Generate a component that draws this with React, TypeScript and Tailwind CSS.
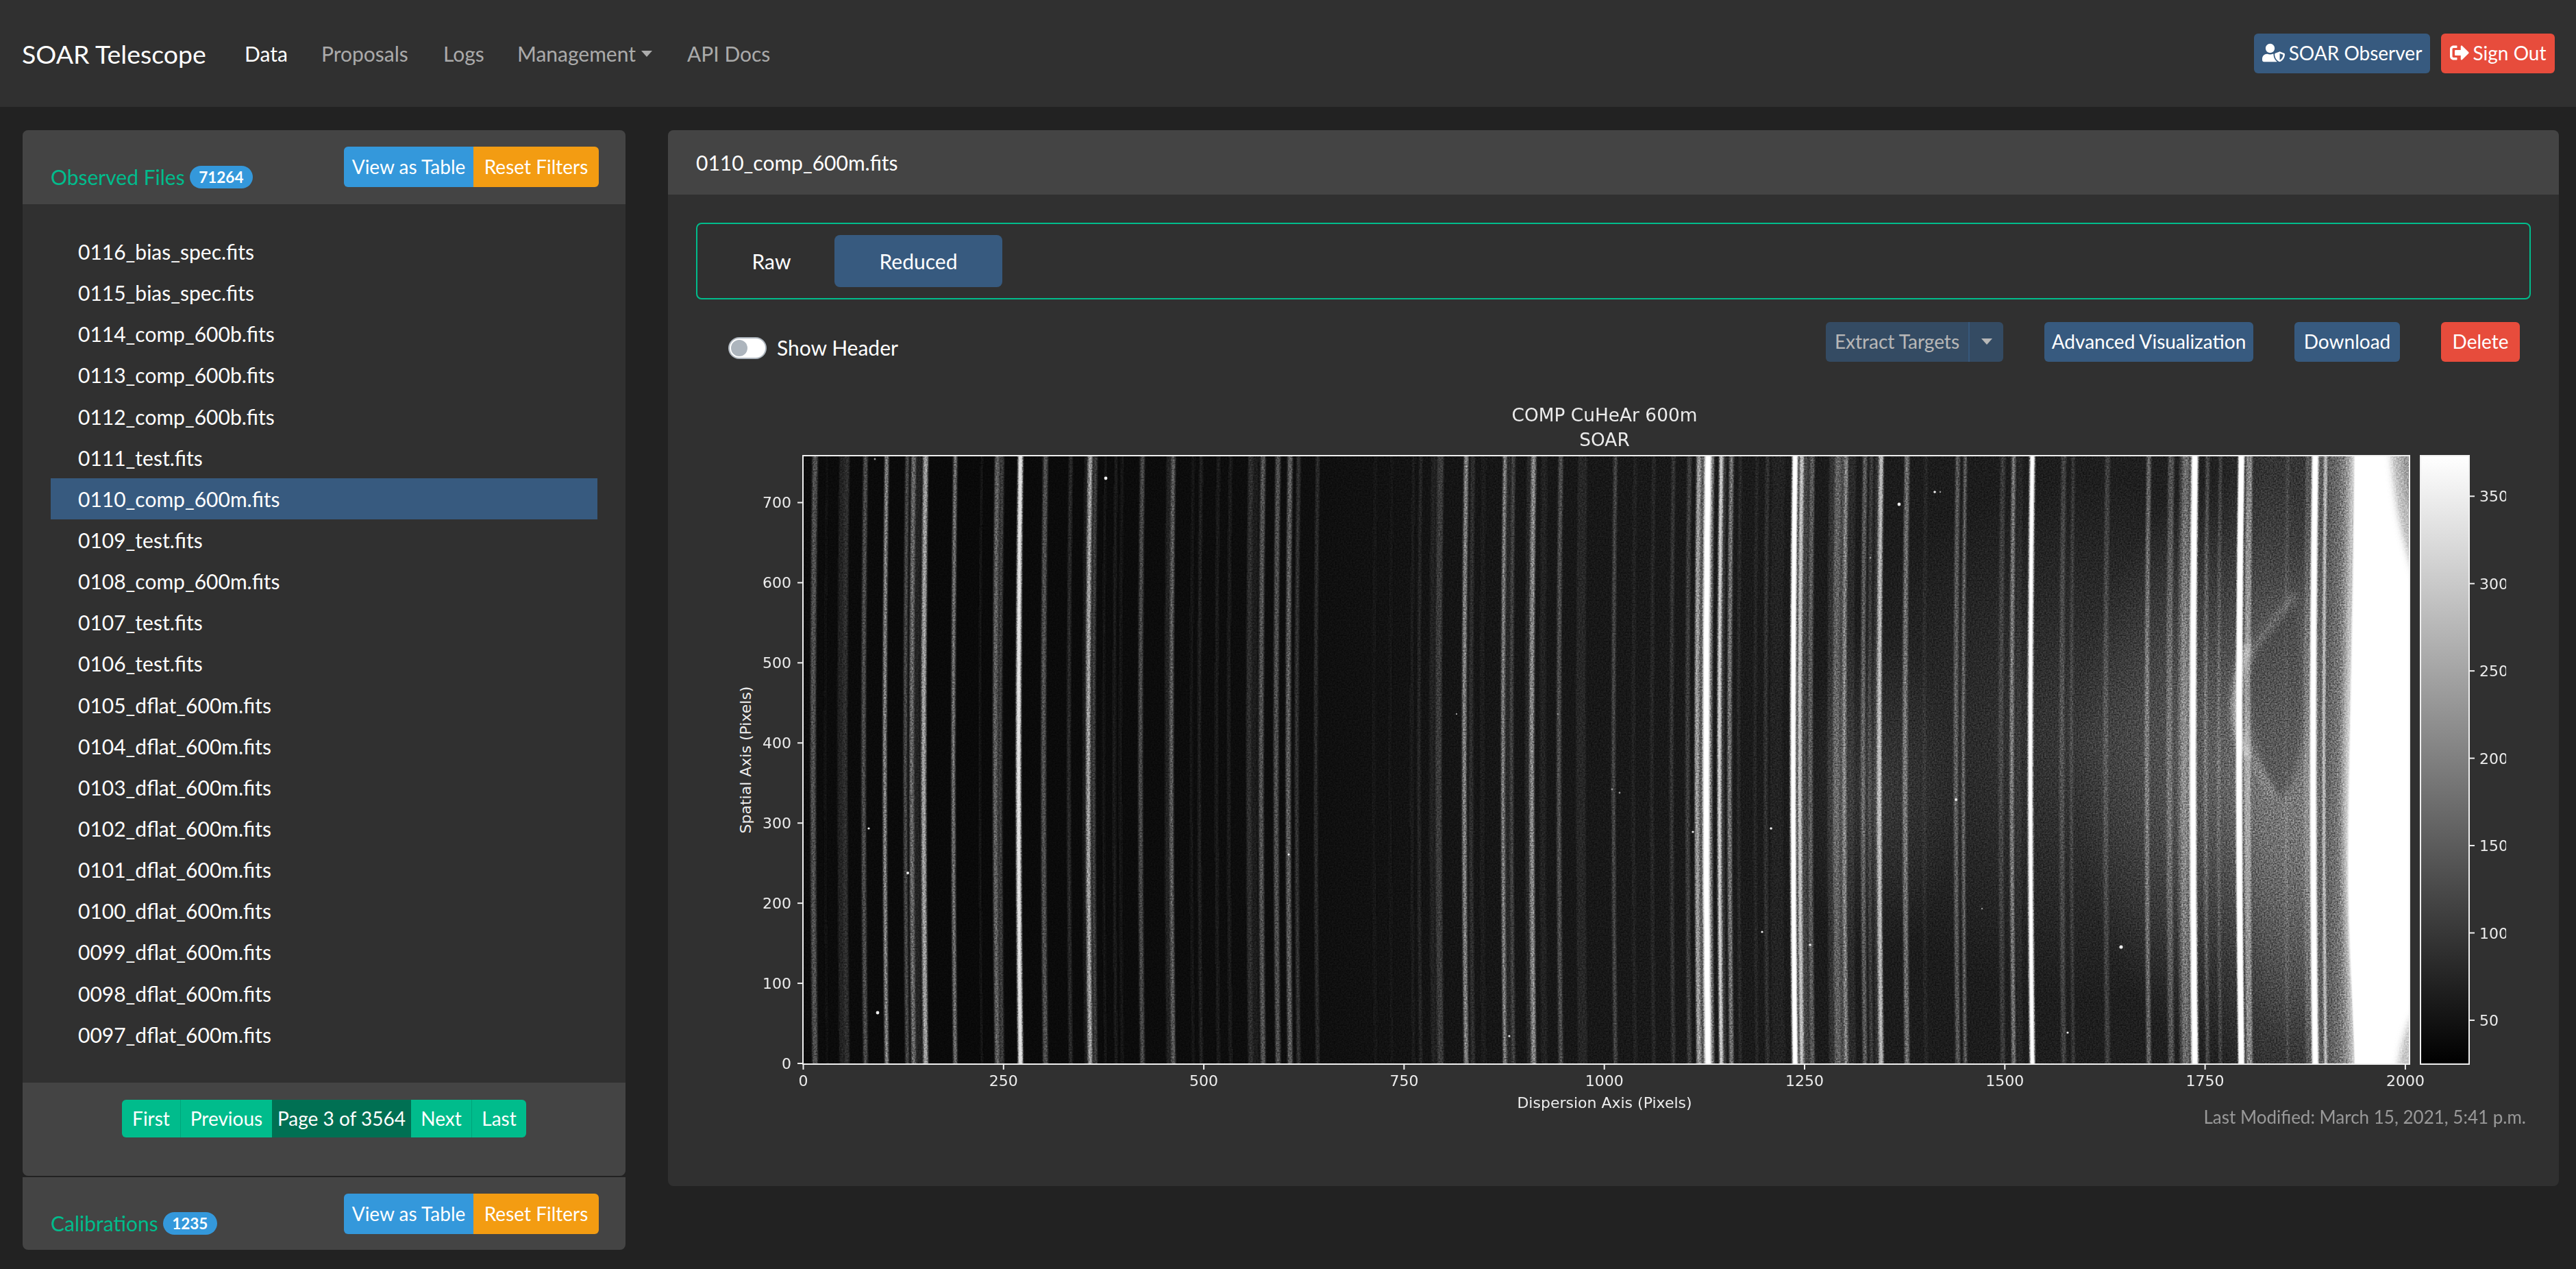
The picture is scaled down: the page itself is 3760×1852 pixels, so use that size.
import React from "react";
import { FaSignOutAlt, FaUserShield } from "react-icons/fa";

const files = [
  "0116_bias_spec.fits",
  "0115_bias_spec.fits",
  "0114_comp_600b.fits",
  "0113_comp_600b.fits",
  "0112_comp_600b.fits",
  "0111_test.fits",
  "0110_comp_600m.fits",
  "0109_test.fits",
  "0108_comp_600m.fits",
  "0107_test.fits",
  "0106_test.fits",
  "0105_dflat_600m.fits",
  "0104_dflat_600m.fits",
  "0103_dflat_600m.fits",
  "0102_dflat_600m.fits",
  "0101_dflat_600m.fits",
  "0100_dflat_600m.fits",
  "0099_dflat_600m.fits",
  "0098_dflat_600m.fits",
  "0097_dflat_600m.fits",
];

// Emission lines per detector segment: [centre, width, grey level].
type Line = [number, number, number];
const UNIT = 2.6576;
const segments: { origin: number; lines: Line[] }[] = [
  {
    origin: 1170,
    lines: [
      [58, 20, 80], [105, 8, 20], [165, 24, 36], [182, 18, 45], [254, 16, 75], [336, 14, 130],
      [416, 14, 70], [460, 24, 35], [440, 16, 105], [487, 18, 158], [602, 14, 110], [705, 10, 20],
      [765, 18, 95], [784, 14, 62], [855, 18, 225], [952, 18, 80], [1050, 14, 42], [1110, 14, 30],
      [1146, 14, 60], [1126, 15, 165], [1185, 10, 22], [1226, 12, 28], [1250, 12, 24], [1328, 16, 74],
      [1430, 16, 32], [1448, 15, 92], [1525, 12, 24], [1556, 12, 36],
    ],
  },
  {
    origin: 1760,
    lines: [
      [55, 14, 26], [102, 14, 26], [200, 24, 28], [180, 18, 45], [228, 18, 82], [286, 18, 80],
      [333, 18, 92], [366, 14, 50], [440, 14, 44], [665, 14, 24], [728, 12, 24], [812, 12, 28],
      [840, 12, 38], [890, 18, 36], [916, 24, 58], [1042, 16, 46], [1016, 16, 128], [1085, 20, 26],
      [1182, 14, 40], [1166, 13, 128], [1199, 14, 66], [1260, 16, 40], [1278, 17, 136], [1320, 24, 32],
      [1383, 16, 78], [1468, 36, 38],
    ],
  },
  {
    origin: 2350,
    lines: [
      [27, 14, 68], [104, 14, 36], [176, 14, 38], [252, 14, 54], [314, 16, 60], [364, 18, 85],
      [350, 15, 160], [404, 12, 115], [386, 25, 255], [450, 14, 55], [437, 13, 210], [477, 16, 115],
      [512, 12, 44], [576, 12, 40], [617, 14, 50], [660, 50, 34], [765, 24, 66], [724, 22, 255],
      [749, 15, 195], [790, 18, 92], [868, 22, 50], [892, 26, 98], [908, 14, 70], [922, 13, 135],
      [945, 30, 44], [995, 16, 92], [1020, 14, 60], [1042, 14, 50], [1058, 16, 185], [1158, 18, 108],
      [1232, 14, 40], [1355, 16, 88], [1384, 12, 94], [1530, 18, 58], [1572, 15, 115],
    ],
  },
  {
    origin: 2940,
    lines: [
      [30, 20, 38], [76, 19, 255], [198, 18, 66], [235, 12, 58], [368, 18, 64], [528, 16, 102],
      [615, 22, 82], [655, 14, 66], [672, 24, 108], [690, 14, 80], [756, 14, 76], [806, 12, 68],
      [707, 25, 255], [918, 24, 135], [887, 20, 255], [1067, 12, 72], [1150, 26, 88], [1196, 36, 112],
      [1174, 23, 255], [1214, 12, 170],
    ],
  },
];

const cosmicRays: [number, number, number][] = [
  [1279, 670, 1.4], [1616, 698, 2.4], [1270, 1209, 1.6], [1327, 1274, 2], [1283, 1478, 2.4], [1883, 1247, 1.6],
  [2128, 1042, 1.2], [2205, 1512, 1.6], [2276, 1042, 1.2], [2355, 1152, 1.4], [2366, 1157, 1.4], [2473, 1214, 1.6],
  [2587, 1209, 1.8], [2574, 1360, 1.6], [2644, 1379, 1.8], [2732, 814, 1.4], [2774, 736, 2.4], [2826, 718, 1.8],
  [2834, 718, 1.2], [2857, 1167, 2], [2895, 1326, 1.2], [3098, 1382, 2.6], [3020, 1507, 1.6],
];

const xTicks = [0, 250, 500, 750, 1000, 1250, 1500, 1750, 2000];
const yTicks = [0, 100, 200, 300, 400, 500, 600, 700];
const barTicks = [50, 100, 150, 200, 250, 300, 350];
const grey = (v: number) => `rgb(${v},${v},${v})`;

function SpectrumPlot() {
  const left = 1174, right = 3519, top = 665, bottom = 1553;
  return (
    <svg viewBox="1060 580 2600 1056" className="block h-[1056px] w-[2600px] shrink-0" fontFamily='"DejaVu Sans", sans-serif' fontSize="22" fill="#ececec">
      <defs>
        <clipPath id="frame"><rect x={left} y={top} width={right - left} height={bottom - top} /></clipPath>
        <linearGradient id="sky" gradientUnits="userSpaceOnUse" x1={left} x2={right} y1="0" y2="0">
          <stop offset="0" stopColor="#0b0b0b" />
          <stop offset="0.1" stopColor="#090909" />
          <stop offset="0.3" stopColor="#0d0d0d" />
          <stop offset="0.42" stopColor="#151515" />
          <stop offset="0.6" stopColor="#1a1a1a" />
          <stop offset="0.75" stopColor="#1c1c1c" />
          <stop offset="0.88" stopColor="#202020" />
          <stop offset="0.91" stopColor="#343434" />
          <stop offset="1" stopColor="#3a3a3a" />
        </linearGradient>
        <linearGradient id="ramp" gradientUnits="userSpaceOnUse" x1="3370" x2="3440" y1="0" y2="0">
          <stop offset="0" stopColor="#484848" stopOpacity="0" />
          <stop offset="0.3" stopColor="#505050" />
          <stop offset="0.65" stopColor="#7a7a7a" />
          <stop offset="1" stopColor="#d0d0d0" />
        </linearGradient>
        <linearGradient id="edge" x1="0" x2="1" y1="0" y2="0">
          <stop offset="0" stopColor="#303030" stopOpacity="0" />
          <stop offset="1" stopColor="#303030" stopOpacity="0.3" />
        </linearGradient>
        <radialGradient id="haze">
          <stop offset="0" stopColor="#fff" stopOpacity="0.27" />
          <stop offset="0.5" stopColor="#fff" stopOpacity="0.13" />
          <stop offset="1" stopColor="#fff" stopOpacity="0" />
        </radialGradient>
        <linearGradient id="bar" x1="0" x2="0" y1="0" y2="1">
          <stop offset="0" stopColor="#fff" />
          <stop offset="1" stopColor="#000" />
        </linearGradient>
        <filter id="soft" filterUnits="userSpaceOnUse" x="1100" y="600" width="2500" height="1000"><feGaussianBlur stdDeviation="1.3 0.5" /></filter>
        <filter id="glow" filterUnits="userSpaceOnUse" x="3100" y="600" width="500" height="1000"><feGaussianBlur stdDeviation="5" /></filter>
        <filter id="grain" filterUnits="userSpaceOnUse" x={left} y={top} width={right - left} height={bottom - top} colorInterpolationFilters="sRGB">
          <feTurbulence type="fractalNoise" baseFrequency="0.45" numOctaves="2" seed="4" />
          <feColorMatrix values="1.1 0 0 0 -0.05  1.1 0 0 0 -0.05  1.1 0 0 0 -0.05  0 0 0 0 1" />
        </filter>
      </defs>

      <g clipPath="url(#frame)" className="isolate">
        <rect x={left} y={top} width={right - left} height={bottom - top} fill="url(#sky)" />
        <g filter="url(#soft)" fill="none">
          {segments.map((s) =>
            s.lines.map(([c, w, v]) => {
              const x = s.origin + c / UNIT;
              return <path key={`${s.origin}-${c}`} d={`M${x} 655Q${x - 6} 1109 ${x} 1563`} stroke={grey(v)} strokeWidth={w / UNIT} />;
            })
          )}
        </g>
        <ellipse cx="3270" cy="1120" rx="240" ry="430" fill="url(#haze)" />
        <ellipse cx="3400" cy="1180" rx="150" ry="400" fill="url(#haze)" />
        <ellipse cx="3050" cy="1080" rx="400" ry="380" fill="url(#haze)" opacity="0.45" />
        <ellipse cx="2740" cy="1160" rx="120" ry="240" fill="url(#haze)" opacity="0.4" />
        <g filter="url(#glow)" fill="none" strokeLinecap="round">
          <path d="M3290 945C3315 905 3345 885 3347 870C3372 980 3372 1130 3330 1165C3300 1130 3275 1040 3290 945Z" fill="#3c3c3c" opacity="0.5" />
          <path d="M3350 870L3292 945Q3240 1050 3290 1110L3320 1160" stroke="#b8b8b8" strokeWidth="8" opacity="0.35" />
          <path d="M3280 945Q3250 1040 3280 1100" stroke="#fff" strokeWidth="10" opacity="0.5" />
        </g>
        <path d="M3367 655H3438Q3422 1250 3438 1563H3367Q3362 1109 3367 655Z" fill="url(#ramp)" opacity="0.8" />
        <g filter="url(#soft)" fill="none">
          <path d="M3273.8 655Q3266 1109 3273.8 1563" stroke="#fff" strokeWidth="8" />
          <path d="M3381.8 655Q3375 1109 3381.8 1563" stroke="#fff" strokeWidth="8.6" />
          <path d="M3396.8 655Q3391 1109 3396.8 1563" stroke="#c4c4c4" strokeWidth="4" />
        </g>
        <g filter="url(#glow)">
          <path d="M3434 640C3432 900 3422 1100 3424 1250C3426 1400 3436 1480 3436 1600H3600V640Z" fill="#d8d8d8" />
        </g>
        <g filter="url(#soft)">
          <path d="M3438 640C3437 900 3430 1080 3429 1250C3429 1400 3438 1480 3439 1600H3600V640Z" fill="#fff" />
        </g>
        <g filter="url(#glow)">
          <path d="M3491 640Q3496 760 3530 850V640Z" fill="#bbb" />
          <path d="M3505 640Q3508 720 3530 770V640Z" fill="#888" opacity="0.7" />
          <path d="M3500 1580Q3504 1510 3530 1470V1580Z" fill="#c4c4c4" />
        </g>
        <rect x={left} y={top} width={right - left} height={bottom - top} filter="url(#grain)" className="mix-blend-overlay" opacity="0.7" />
        {cosmicRays.map(([x, y, r]) => <circle key={`${x}-${y}`} cx={x} cy={y} r={r} fill={r > 1.5 ? "#eee" : "#999"} />)}
      </g>

      <rect x={left} y={top} width={right - left} height={bottom - top} fill="none" stroke="#efefef" strokeWidth="2" />
      {xTicks.map((t) => {
        const x = 1174.5 + t * 1.1692;
        return (
          <g key={t}>
            <path d={`M${x} 1553v8`} stroke="#efefef" strokeWidth="2" />
            <text x={x} y="1585" textAnchor="middle">{t}</text>
          </g>
        );
      })}
      {yTicks.map((t) => {
        const y = 1552 - t * 1.1693;
        return (
          <g key={t}>
            <path d={`M1166 ${y}h8`} stroke="#efefef" strokeWidth="2" />
            <text x="1157" y={y + 8} textAnchor="end">{t}</text>
          </g>
        );
      })}
      <text x="2344" y="1617" textAnchor="middle">Dispersion Axis (Pixels)</text>
      <text transform="translate(1098 1109) rotate(-90)" textAnchor="middle">Spatial Axis (Pixels)</text>
      <text x="2344" y="615" textAnchor="middle" fontSize="26.4">COMP CuHeAr 600m</text>
      <text x="2344" y="651" textAnchor="middle" fontSize="26.4">SOAR</text>

      <rect x="3535" y={top} width="71" height={bottom - top} fill="url(#bar)" stroke="#efefef" strokeWidth="2" />
      {barTicks.map((t) => {
        const y = 1616.4 - t * 2.549;
        return (
          <g key={t}>
            <path d={`M3606 ${y}h8`} stroke="#efefef" strokeWidth="2" />
            <text x="3621" y={y + 8}>{t}</text>
          </g>
        );
      })}
    </svg>
  );
}

function Caret({ className = "" }: { className?: string }) {
  return <span className={`inline-block border-x-[8.5px] border-t-[9px] border-x-transparent border-t-current ${className}`} />;
}

function PanelHeader({ title, count }: { title: string; count: string }) {
  return (
    <div className="flex w-full justify-between pr-[39px] pl-[41px]">
      <div className="flex items-center gap-[7px] pt-[5px]">
        <span className="text-[#00bc8c]">{title}</span>
        <span className="flex h-[33px] items-center rounded-full bg-[#3498db] px-[13.5px] pt-[2px] text-[22.5px] leading-none font-bold">{count}</span>
      </div>
      <div className="flex h-[59px] overflow-hidden rounded-[6px] text-[28px] leading-[55px]">
        <button className="w-[189px] bg-[#3498db]">View as Table</button>
        <button className="w-[183px] bg-[#f39c12]">Reset Filters</button>
      </div>
    </div>
  );
}

const smallButton = "flex h-[58px] items-center justify-center rounded-[6px] pb-[2px] text-[28px] leading-none";

export default function App() {
  return (
    <div className="h-[1852px] w-[3760px] overflow-hidden bg-[#222] font-['Lato',sans-serif] text-[30px] leading-[45px] text-white">
      <nav className="flex h-[156px] items-center bg-[#303030] pr-[31px] pl-8">
        <span className="w-[325px] text-[37.5px]">SOAR Telescope</span>
        <span className="w-[112px]">Data</span>
        <span className="w-[178px] text-white/60">Proposals</span>
        <span className="w-[108px] text-white/60">Logs</span>
        <span className="flex w-[248px] items-center gap-2 text-white/60">Management <Caret /></span>
        <span className="text-white/60">API Docs</span>
        <div className="ml-auto flex gap-4">
          <button className={`${smallButton} w-[257px] gap-[6px] bg-[#375a7f]`}><FaUserShield className="text-[27px] h-[28px] w-[33px]" />SOAR Observer</button>
          <button className={`${smallButton} w-[166px] gap-[6px] bg-[#e74c3c]`}><FaSignOutAlt className="h-[28px] w-[28px]" />Sign Out</button>
        </div>
      </nav>

      <main className="flex items-start gap-[62px] pt-[34px] pl-[33px]">
        <aside className="w-[880px]">
          <section className="overflow-hidden rounded-[8px] bg-[#303030]">
            <header className="flex h-[108px] bg-[#444] pt-6"><PanelHeader title="Observed Files" count="71264" /></header>
            <ul className="h-[1282px] px-[41px] pt-[39px]">
              {files.map((f) => (
                <li key={f} className={`h-[60.15px] pl-[40px] leading-[61px] ${f === "0110_comp_600m.fits" ? "bg-[#375a7f]" : ""}`}>{f}</li>
              ))}
            </ul>
            <footer className="flex h-[136px] justify-center bg-[#444] pt-[25px]">
              <div className="flex h-[55px] overflow-hidden rounded-[6px] bg-[#00bc8c] text-[28px] leading-[53px]">
                <button className="w-[85px]">First</button>
                <button className="w-[134px] border-l border-[#00a47a]">Previous</button>
                <button className="w-[203px] bg-[#007053]">Page 3 of 3564</button>
                <button className="w-[88px]">Next</button>
                <button className="w-[80px] border-l border-[#00a47a]">Last</button>
              </div>
            </footer>
          </section>
          <section className="mt-[2px] h-[106px] rounded-b-[8px] bg-[#444] pt-6 flex">
            <PanelHeader title="Calibrations" count="1235" />
          </section>
        </aside>

        <section className="h-[1541px] w-[2760px] overflow-hidden rounded-[8px] bg-[#303030]">
          <header className="h-[94px] bg-[#444] pt-[25px] pl-[41px]">0110_comp_600m.fits</header>
          <div className="mx-[41px] mt-[41px] flex h-[112px] items-center rounded-[8px] border-2 border-[#00bc8c] pl-[16px]">
            <span className="w-[184px] text-center">Raw</span>
            <span className="flex h-[76px] w-[245px] items-center justify-center rounded-[8px] bg-[#375a7f]">Reduced</span>
          </div>
          <div className="flex h-[92px] items-start pt-[33px] pr-[57px] pl-[88px]">
            <label className="mt-[15px] flex items-center gap-[15px]">
              <span className="flex h-8 w-14 items-center rounded-full border-2 border-[#adb5bd] bg-white pl-[2px]">
                <span className="size-6 rounded-full bg-[#adb5bd]" />
              </span>
              Show Header
            </label>
            <div className="ml-auto flex">
              <div className="mr-[60px] flex opacity-65">
                <button className={`${smallButton} w-[208px] rounded-r-none bg-[#375a7f]`}>Extract Targets</button>
                <button className={`${smallButton} w-[51px] rounded-l-none border-l-2 border-[#3b6ea5] bg-[#375a7f]`}><Caret className="text-white" /></button>
              </div>
              <button className={`${smallButton} mr-[60px] w-[305px] bg-[#375a7f]`}>Advanced Visualization</button>
              <button className={`${smallButton} mr-[60px] w-[154px] bg-[#375a7f]`}>Download</button>
              <button className={`${smallButton} w-[115px] bg-[#e74c3c]`}>Delete</button>
            </div>
          </div>
          <div className="mt-[51px] pl-[83px]"><SpectrumPlot /></div>
          <p className="-mt-[28px] pr-[48px] text-right text-[26px] text-[#999]">Last Modified: March 15, 2021, 5:41 p.m.</p>
        </section>
      </main>
    </div>
  );
}
